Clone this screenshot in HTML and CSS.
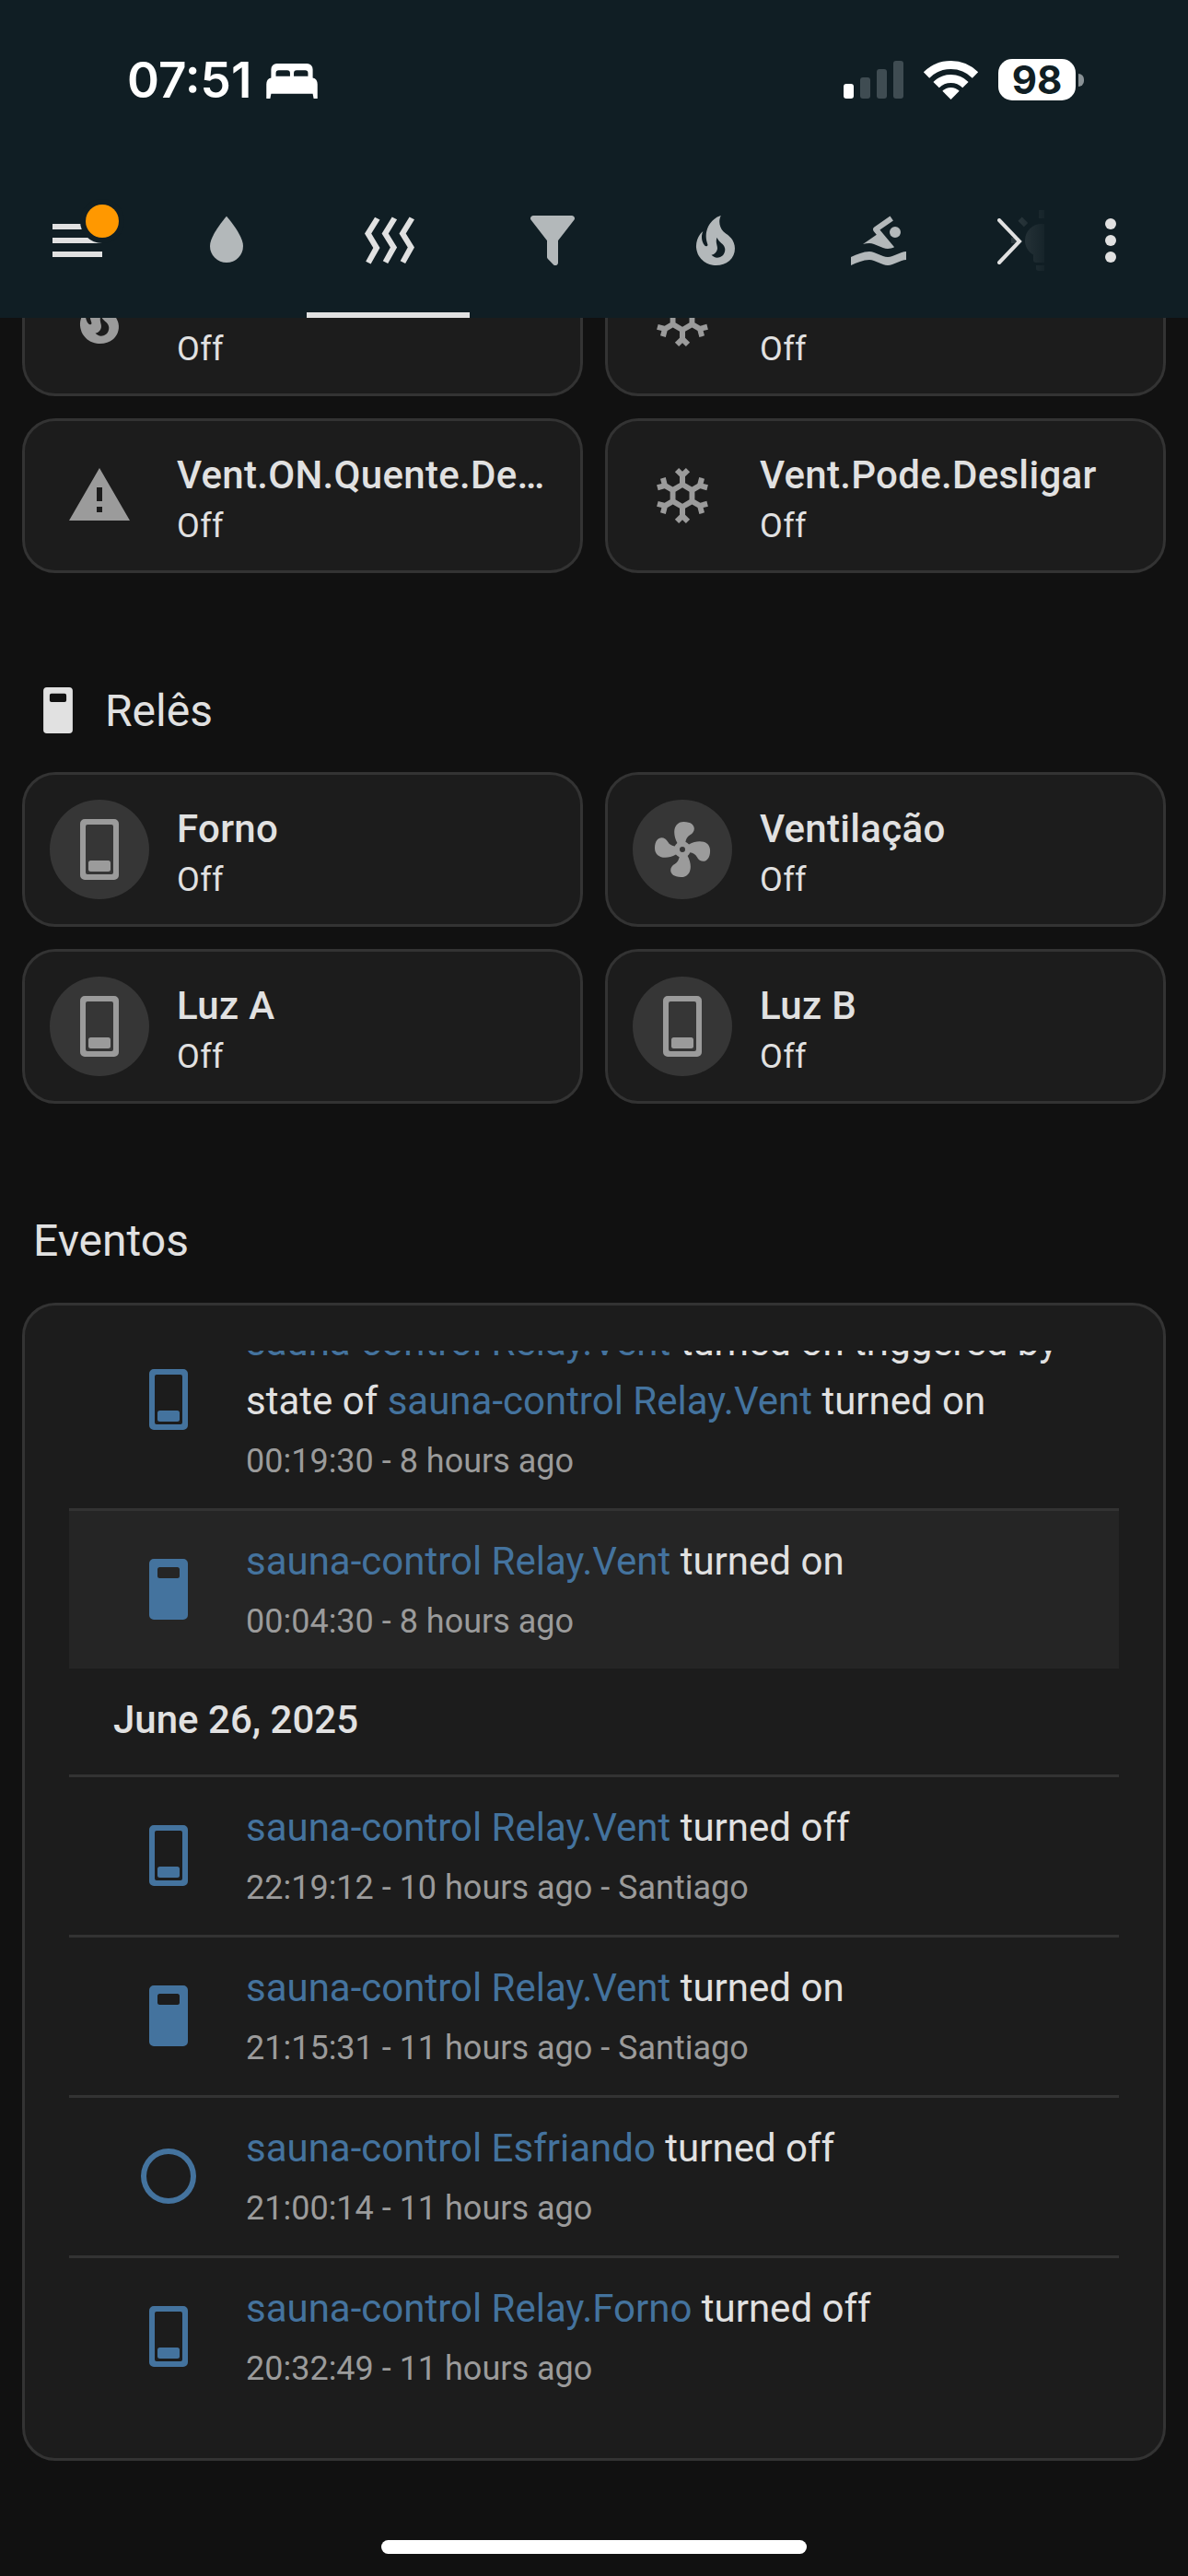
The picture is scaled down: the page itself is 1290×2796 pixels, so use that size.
FILE: index.html
```html
<!DOCTYPE html>
<html lang="pt">
<head>
<meta charset="utf-8">
<title>sauna-control</title>
<link rel="stylesheet" href="styles.css">
</head>
<body>
<svg class="defs" aria-hidden="true">
  <symbol id="i-water" viewBox="0 0 24 24"><path d="M12,20A6,6 0 0,1 6,14C6,10 12,3.25 12,3.25C12,3.25 18,10 18,14A6,6 0 0,1 12,20Z"/></symbol>
  <symbol id="i-heat" viewBox="0 0 24 24"><path d="M8.5 4.5L5.4 9.5L8.5 14.7L5.2 20.5L3.4 19.6L6.1 14.7L3 9.5L6.7 3.6L8.5 4.5M14.7 4.4L11.6 9.5L14.7 14.5L11.4 20.3L9.6 19.4L12.3 14.5L9.2 9.5L12.9 3.5L14.7 4.4M21 4.4L17.9 9.5L21 14.5L17.7 20.3L15.9 19.4L18.6 14.5L15.5 9.5L19.2 3.5L21 4.4"/></symbol>
  <symbol id="i-filter" viewBox="0 0 24 24"><path d="M14,12V19.88C14.04,20.18 13.94,20.5 13.71,20.71C13.32,21.1 12.69,21.1 12.3,20.71L10.29,18.7C10.06,18.47 9.96,18.16 10,17.87V12H9.97L4.21,4.62C3.87,4.19 3.95,3.56 4.38,3.22C4.57,3.08 4.78,3 5,3V3H19V3C19.22,3 19.43,3.08 19.62,3.22C20.05,3.56 20.13,4.19 19.79,4.62L14.03,12H14Z"/></symbol>
  <symbol id="i-fire" viewBox="0 0 24 24"><path d="M17.66 11.2C17.43 10.9 17.15 10.64 16.89 10.38C16.22 9.78 15.46 9.35 14.82 8.72C13.33 7.26 13 4.85 13.95 3C13 3.23 12.17 3.75 11.46 4.32C8.87 6.4 7.85 10.07 9.07 13.22C9.11 13.32 9.15 13.42 9.15 13.55C9.15 13.77 9 13.97 8.8 14.05C8.57 14.15 8.33 14.09 8.14 13.93C8.08 13.88 8.04 13.83 8 13.76C6.87 12.33 6.69 10.28 7.45 8.64C5.78 10 4.87 12.3 5 14.47C5.06 14.97 5.12 15.47 5.29 15.97C5.43 16.57 5.7 17.17 6 17.7C7.08 19.43 8.95 20.67 10.96 20.92C13.1 21.19 15.39 20.8 17.03 19.32C18.86 17.66 19.5 15 18.56 12.72L18.43 12.46C18.22 12 17.66 11.2 17.66 11.2M14.5 17.5C14.22 17.74 13.76 18 13.4 18.1C12.28 18.5 11.16 17.94 10.5 17.28C11.69 17 12.4 16.12 12.61 15.23C12.78 14.43 12.46 13.77 12.33 13C12.21 12.26 12.23 11.63 12.5 10.94C12.69 11.32 12.89 11.7 13.13 12C13.9 13 15.11 13.44 15.37 14.8C15.41 14.94 15.43 15.08 15.43 15.23C15.46 16.05 15.1 16.95 14.5 17.5H14.5Z"/></symbol>
  <symbol id="i-swim" viewBox="0 0 24 24"><path d="M2,18C4.22,17 6.44,16 8.67,16C10.89,16 13.11,18 15.33,18C17.56,18 19.78,16 22,16V19C19.78,19 17.56,21 15.33,21C13.11,21 10.89,19 8.67,19C6.44,19 4.22,20 2,21V18M8.67,13C7.89,13 7.12,13.12 6.35,13.32L11.27,9.88L10.23,8.64C10.09,8.47 10,8.24 10,8C10,7.66 10.17,7.35 10.44,7.17L16.16,3.17L17.31,4.8L12.47,8.19L17.7,14.42C16.91,14.75 16.12,15 15.33,15C13.11,15 10.89,13 8.67,13M18,7A2,2 0 0,1 20,9A2,2 0 0,1 18,11A2,2 0 0,1 16,9A2,2 0 0,1 18,7Z"/></symbol>
  <symbol id="i-bulb" viewBox="0 0 24 24"><path d="M12,6A6,6 0 0,1 18,12C18,14.22 16.79,16.16 15,17.2V19A1,1 0 0,1 14,20H10A1,1 0 0,1 9,19V17.2C7.21,16.16 6,14.22 6,12A6,6 0 0,1 12,6M14,21V22A1,1 0 0,1 13,23H11A1,1 0 0,1 10,22V21H14M20,11H23V13H20V11M1,11H4V13H1V11M13,1V4H11V1H13M4.92,3.5L7.05,5.64L5.63,7.05L3.5,4.93L4.92,3.5M16.95,5.63L19.07,3.5L20.5,4.93L18.36,7.05L16.95,5.63Z"/></symbol>
  <symbol id="i-alert" viewBox="0 0 24 24"><path d="M13 14H11V9H13M13 18H11V16H13M1 21H23L12 2L1 21Z"/></symbol>
  <symbol id="i-snow" viewBox="0 0 24 24"><path d="M20.79,13.95L18.46,14.57L16.46,13.44V10.56L18.46,9.43L20.79,10.05L21.31,8.12L19.54,7.65L20,5.88L18.07,5.36L17.45,7.69L15.45,8.82L13,7.38V5.12L14.71,3.41L13.29,2L12,3.29L10.71,2L9.29,3.41L11,5.12V7.38L8.5,8.82L6.5,7.69L5.92,5.36L4,5.88L4.47,7.65L2.7,8.12L3.22,10.05L5.55,9.43L7.55,10.56V13.45L5.55,14.58L3.22,13.96L2.7,15.89L4.47,16.36L4,18.12L5.93,18.64L6.55,16.31L8.55,15.18L11,16.62V18.88L9.29,20.59L10.71,22L12,20.71L13.29,22L14.7,20.59L13,18.88V16.62L15.5,15.17L17.5,16.3L18.12,18.63L20,18.12L19.53,16.35L21.3,15.88L20.79,13.95M9.5,10.56L12,9.11L14.5,10.56V13.44L12,14.89L9.5,13.44V10.56Z" fill-rule="evenodd"/></symbol>
  <symbol id="i-fan" viewBox="0 0 24 24"><path d="M12,11A1,1 0 0,0 11,12A1,1 0 0,0 12,13A1,1 0 0,0 13,12A1,1 0 0,0 12,11M12.5,2C17,2 17.11,5.57 14.75,6.75C13.76,7.24 13.32,8.29 13.13,9.22C13.61,9.42 14.03,9.73 14.35,10.13C18.05,8.13 22.03,8.92 22.03,12.5C22.03,17 18.46,17.1 17.28,14.73C16.78,13.74 15.72,13.3 14.79,13.11C14.59,13.59 14.28,14 13.88,14.34C15.87,18.03 15.08,22 11.5,22C7,22 6.91,18.42 9.27,17.24C10.25,16.75 10.69,15.71 10.89,14.79C10.4,14.59 9.97,14.27 9.65,13.87C5.96,15.85 2,15.07 2,11.5C2,7 5.56,6.89 6.74,9.26C7.24,10.25 8.29,10.68 9.22,10.87C9.41,10.39 9.73,9.97 10.14,9.65C8.15,5.96 8.94,2 12.5,2Z" fill-rule="evenodd"/></symbol>
  <symbol id="i-circle" viewBox="0 0 24 24"><path d="M12,20A8,8 0 0,1 4,12A8,8 0 0,1 12,4A8,8 0 0,1 20,12A8,8 0 0,1 12,20M12,2A10,10 0 0,0 2,12A10,10 0 0,0 12,22A10,10 0 0,0 22,12A10,10 0 0,0 12,2Z"/></symbol>
  <symbol id="i-sw-off" viewBox="0 0 42 66"><path fill-rule="evenodd" d="M5 0H37A5 5 0 0 1 42 5V61A5 5 0 0 1 37 66H5A5 5 0 0 1 0 61V5A5 5 0 0 1 5 0ZM8 6A2 2 0 0 0 6 8V58A2 2 0 0 0 8 60H34A2 2 0 0 0 36 58V8A2 2 0 0 0 34 6Z"/><rect x="9" y="45" width="24" height="12" rx="2.5"/></symbol>
  <symbol id="i-sw-on" viewBox="0 0 42 66"><path fill-rule="evenodd" d="M5 0H37A5 5 0 0 1 42 5V61A5 5 0 0 1 37 66H5A5 5 0 0 1 0 61V5A5 5 0 0 1 5 0ZM11.5 9A2.5 2.5 0 0 0 9 11.5V18.500A2.500 2.500 0 0 0 11.5 21H30.500A2.500 2.500 0 0 0 33 18.500V11.5A2.500 2.500 0 0 0 30.500 9Z"/></symbol>
</svg>

<header class="app-header">
  <div class="status">
    <div class="status-left">
      <span class="clock">07:51</span>
      <svg class="bed" viewBox="0 0 54 37"><path fill-rule="evenodd" d="M11 0H43A6 6 0 0 1 49 6V15Q54 16 54 22V37H50L49 32H5L4 37H0V22Q0 16 5 15V6A6 6 0 0 1 11 0ZM13 7A3 3 0 0 0 10 10V13.500H25V10A3 3 0 0 0 22 7ZM32 7A3 3 0 0 0 29 10V13.500H44V10A3 3 0 0 0 41 7Z"/></svg>
    </div>
    <div class="status-right">
      <svg class="signal" viewBox="0 0 65 41">
        <rect class="sig-on" x="0" y="25" width="11" height="16" rx="3"/>
        <rect class="sig-off" x="18" y="18" width="11" height="23" rx="3"/>
        <rect class="sig-off" x="36" y="9" width="11" height="32" rx="3"/>
        <rect class="sig-off" x="54" y="0" width="11" height="41" rx="3"/>
      </svg>
      <svg class="wifi" viewBox="0 0 57 42">
        <path class="wifi-dot" d="M28.500 42L19.300 32.800A13 13 0 0 1 37.700 32.800Z"/>
        <path class="wifi-arc" d="M12.600 26.100A22.500 22.500 0 0 1 44.400 26.100"/>
        <path class="wifi-arc" d="M2 15.500A37.500 37.500 0 0 1 55 15.500"/>
      </svg>
      <div class="battery">
        <span class="battery-body">98</span>
        <span class="battery-nub"></span>
      </div>
    </div>
  </div>
  <nav class="toolbar">
    <div class="menu-btn">
      <svg class="ico" viewBox="0 0 24 24"><path d="M3,6H21V8H3V6M3,11H21V13H3V11M3,16H21V18H3V16Z"/></svg>
      <span class="badge"></span>
    </div>
    <div class="tabs">
      <div class="tab"><svg class="ico"><use href="#i-water"/></svg></div>
      <div class="tab active"><svg class="ico"><use href="#i-heat"/></svg></div>
      <div class="tab"><svg class="ico"><use href="#i-filter"/></svg></div>
      <div class="tab"><svg class="ico"><use href="#i-fire"/></svg></div>
      <div class="tab"><svg class="ico"><use href="#i-swim"/></svg></div>
      <div class="tab bulb"><svg class="ico"><use href="#i-bulb"/></svg></div>
      <span class="tab-fade"></span>
      <svg class="chevron" viewBox="0 0 27 50"><path d="M2 2L24 25L2 48"/></svg>
    </div>
    <div class="dots-btn">
      <svg class="ico" viewBox="0 0 24 24"><circle cx="12" cy="6" r="2"/><circle cx="12" cy="12" r="2"/><circle cx="12" cy="18" r="2"/></svg>
    </div>
  </nav>
</header>

<main class="content">
  <section class="tile-grid">
    <article class="tile">
      <div class="tile-icon"><svg class="ico"><use href="#i-fire"/></svg></div>
      <div class="tile-text"><div class="tile-name">&nbsp;</div><div class="tile-state">Off</div></div>
    </article>
    <article class="tile">
      <div class="tile-icon"><svg class="ico"><use href="#i-snow"/></svg></div>
      <div class="tile-text"><div class="tile-name">&nbsp;</div><div class="tile-state">Off</div></div>
    </article>
    <article class="tile">
      <div class="tile-icon"><svg class="ico"><use href="#i-alert"/></svg></div>
      <div class="tile-text"><div class="tile-name">Vent.ON.Quente.Desligar</div><div class="tile-state">Off</div></div>
    </article>
    <article class="tile">
      <div class="tile-icon"><svg class="ico"><use href="#i-snow"/></svg></div>
      <div class="tile-text"><div class="tile-name">Vent.Pode.Desligar</div><div class="tile-state">Off</div></div>
    </article>
  </section>

  <h2 class="section-head relays">
    <svg class="head-icon"><use href="#i-sw-on"/></svg>
    <span>Relês</span>
  </h2>

  <section class="tile-grid">
    <article class="tile">
      <div class="tile-icon round"><svg class="sw"><use href="#i-sw-off"/></svg></div>
      <div class="tile-text"><div class="tile-name">Forno</div><div class="tile-state">Off</div></div>
    </article>
    <article class="tile">
      <div class="tile-icon round"><svg class="ico"><use href="#i-fan"/></svg></div>
      <div class="tile-text"><div class="tile-name">Ventilação</div><div class="tile-state">Off</div></div>
    </article>
    <article class="tile">
      <div class="tile-icon round"><svg class="sw"><use href="#i-sw-off"/></svg></div>
      <div class="tile-text"><div class="tile-name">Luz A</div><div class="tile-state">Off</div></div>
    </article>
    <article class="tile">
      <div class="tile-icon round"><svg class="sw"><use href="#i-sw-off"/></svg></div>
      <div class="tile-text"><div class="tile-name">Luz B</div><div class="tile-state">Off</div></div>
    </article>
  </section>

  <h2 class="section-head events">Eventos</h2>

  <section class="logbook">
    <div class="log-list">
      <div class="log-row scrolled">
        <div class="log-icon"><svg class="sw"><use href="#i-sw-off"/></svg></div>
        <div class="log-text">
          <div class="log-main"><a>sauna-control Relay.Vent</a> turned on triggered by state of <a>sauna-control Relay.Vent</a> turned on</div>
          <div class="log-meta">00:19:30 - 8 hours ago</div>
        </div>
      </div>
      <div class="log-row hover">
        <div class="log-icon"><svg class="sw"><use href="#i-sw-on"/></svg></div>
        <div class="log-text">
          <div class="log-main"><a>sauna-control Relay.Vent</a> turned on</div>
          <div class="log-meta">00:04:30 - 8 hours ago</div>
        </div>
      </div>
      <div class="log-date">June 26, 2025</div>
      <div class="log-row">
        <div class="log-icon"><svg class="sw"><use href="#i-sw-off"/></svg></div>
        <div class="log-text">
          <div class="log-main"><a>sauna-control Relay.Vent</a> turned off</div>
          <div class="log-meta">22:19:12 - 10 hours ago - Santiago</div>
        </div>
      </div>
      <div class="log-row">
        <div class="log-icon"><svg class="sw"><use href="#i-sw-on"/></svg></div>
        <div class="log-text">
          <div class="log-main"><a>sauna-control Relay.Vent</a> turned on</div>
          <div class="log-meta">21:15:31 - 11 hours ago - Santiago</div>
        </div>
      </div>
      <div class="log-row">
        <div class="log-icon"><svg class="ico"><use href="#i-circle"/></svg></div>
        <div class="log-text">
          <div class="log-main"><a>sauna-control Esfriando</a> turned off</div>
          <div class="log-meta">21:00:14 - 11 hours ago</div>
        </div>
      </div>
      <div class="log-row">
        <div class="log-icon"><svg class="sw"><use href="#i-sw-off"/></svg></div>
        <div class="log-text">
          <div class="log-main"><a>sauna-control Relay.Forno</a> turned off</div>
          <div class="log-meta">20:32:49 - 11 hours ago</div>
        </div>
      </div>
    </div>
  </section>
</main>

<div class="home-bar"></div>
</body>
</html>
```

FILE: styles.css
```css
* { box-sizing: border-box; }
html, body { margin: 0; padding: 0; }
body {
  position: relative;
  width: 1290px;
  height: 2796px;
  overflow: hidden;
  background: #111111;
  color: #e1e1e1;
  font-family: Roboto, "Noto Sans", sans-serif;
}
.defs { position: absolute; width: 0; height: 0; }
svg { display: block; fill: currentColor; }
.ico { width: 72px; height: 72px; flex: none; }
.sw { width: 42px; height: 66px; flex: none; }

/* header */
.app-header {
  position: absolute;
  top: 0; left: 0; right: 0;
  z-index: 2;
  height: 345px;
  background: #101e24;
}
.status {
  height: 175px;
  display: flex;
  align-items: center;
  justify-content: space-between;
  padding: 0 113px 0 138px;
  color: #fff;
}
.status-left { display: flex; align-items: center; gap: 16px; }
.clock {
  font-family: Inter, sans-serif;
  font-weight: 600;
  font-size: 53px;
  line-height: 1;
}
.bed { width: 56px; height: 38px; fill: #fff; }
.status-right { display: flex; align-items: center; gap: 23px; margin-top: -2px; }
.signal { width: 65px; height: 41px; }
.sig-on { fill: #fff; }
.sig-off { fill: #3f4c52; }
.wifi { width: 57px; height: 42px; overflow: visible; }
.wifi-dot { fill: #fff; }
.wifi-arc { fill: none; stroke: #fff; stroke-width: 9; }
.battery { display: flex; align-items: center; gap: 3px; }
.battery-body {
  width: 84px;
  height: 45px;
  border-radius: 15px;
  background: #fff;
  color: #101e24;
  font-family: Inter, sans-serif;
  font-weight: 700;
  font-size: 42px;
  line-height: 45px;
  text-align: center;
}
.battery-nub {
  width: 6px;
  height: 14px;
  border-radius: 0 7px 7px 0;
  background: #8a9296;
}

.toolbar {
  margin-top: 50px;
  height: 120px;
  display: flex;
  align-items: flex-start;
  padding-left: 48px;
}
.menu-btn { position: relative; width: 72px; height: 72px; flex: none; color: #e1e1e1; }
.badge {
  position: absolute;
  top: -3px;
  left: 45px;
  width: 36px;
  height: 36px;
  border-radius: 50%;
  background: #ff9800;
  box-shadow: 0 0 0 6px #101e24;
}
.tabs {
  position: relative;
  display: flex;
  height: 120px;
  width: 976.5px;
  margin-left: 37.5px;
  overflow: hidden;
  flex: none;
}
.tab {
  position: relative;
  width: 177px;
  height: 120px;
  flex: none;
  display: flex;
  justify-content: center;
  color: #b3b8ba;
}
.tab.active { color: #e1e1e1; }
.tab.active::after {
  content: "";
  position: absolute;
  left: -1.5px;
  bottom: 0;
  width: 177px;
  height: 6px;
  background: #e1e1e1;
}
.tab-fade {
  position: absolute;
  top: 0;
  bottom: 0;
  right: 0;
  width: 60px;
  background: linear-gradient(90deg, rgba(16,30,36,.72), rgba(16,30,36,.96));
}
.chevron {
  position: absolute;
  top: 12px;
  left: 925.5px;
  width: 27px;
  height: 50px;
  fill: none;
  stroke: #e1e1e1;
  stroke-width: 4;
  stroke-linecap: round;
  stroke-linejoin: miter;
}
.dots-btn { margin-left: 36px; color: #e1e1e1; }

/* content */
.content { padding-top: 262px; }
.tile-grid {
  display: grid;
  grid-template-columns: 609px 609px;
  grid-auto-rows: 168px;
  gap: 24px;
  padding: 0 24px;
}
.tile {
  display: flex;
  align-items: center;
  gap: 30px;
  padding: 0 27px;
  background: #1c1c1c;
  border: 3px solid #333333;
  border-radius: 36px;
  min-width: 0;
}
.tile-icon {
  width: 108px;
  height: 108px;
  flex: none;
  display: flex;
  align-items: center;
  justify-content: center;
  color: #9b9b9b;
  border-radius: 50%;
}
.tile-icon.round { background: #363636; }
.tile-text { min-width: 0; flex: 1; padding-top: 5px; }
.tile-name {
  font-size: 42px;
  font-weight: 500;
  line-height: 60px;
  letter-spacing: .3px;
  margin-bottom: 1px;
  white-space: nowrap;
  overflow: hidden;
  text-overflow: ellipsis;
}
.tile-state {
  font-size: 36px;
  font-weight: 400;
  line-height: 48px;
  letter-spacing: .4px;
}

.section-head {
  display: flex;
  align-items: center;
  height: 96px;
  margin: 0;
  font-size: 48px;
  font-weight: 400;
  color: #e1e1e1;
}
.section-head.relays {
  margin: 101px 0 19px;
  padding-left: 47px;
  gap: 35px;
}
.head-icon { width: 32px; height: 50px; }
.section-head.events {
  margin: 100px 0 20px;
  padding-left: 36px;
}

/* logbook */
.logbook {
  height: 1257px;
  margin: 0 24px;
  padding: 49px 48px 45px;
  display: flex;
  flex-direction: column;
  background: #1c1c1c;
  border: 3px solid #333333;
  border-radius: 36px;
}
.log-list { flex: 1; min-height: 0; overflow: hidden; }
.log-row {
  display: flex;
  border-top: 3px solid #333333;
  padding: 23px 48px 18px 72px;
  gap: 48px;
}
.log-row.scrolled { margin-top: -67px; }
.log-row.hover { background: #252525; }
.log-icon {
  width: 72px;
  flex: none;
  display: flex;
  align-items: center;
  justify-content: center;
  color: #44739e;
  position: relative;
  top: -3px;
}
.log-text { min-width: 0; flex: 1; }
.log-main {
  font-size: 42px;
  line-height: 64px;
  color: #e1e1e1;
}
.log-main a { color: #44739e; }
.log-meta {
  font-size: 36px;
  line-height: 66px;
  color: #9b9b9b;
}
.log-date {
  height: 115px;
  padding: 26px 0 0 48px;
  font-size: 42px;
  font-weight: 500;
  line-height: 60px;
}

.home-bar {
  position: absolute;
  left: 414px;
  top: 2757px;
  width: 462px;
  height: 15px;
  border-radius: 8px;
  background: #fff;
}
```
